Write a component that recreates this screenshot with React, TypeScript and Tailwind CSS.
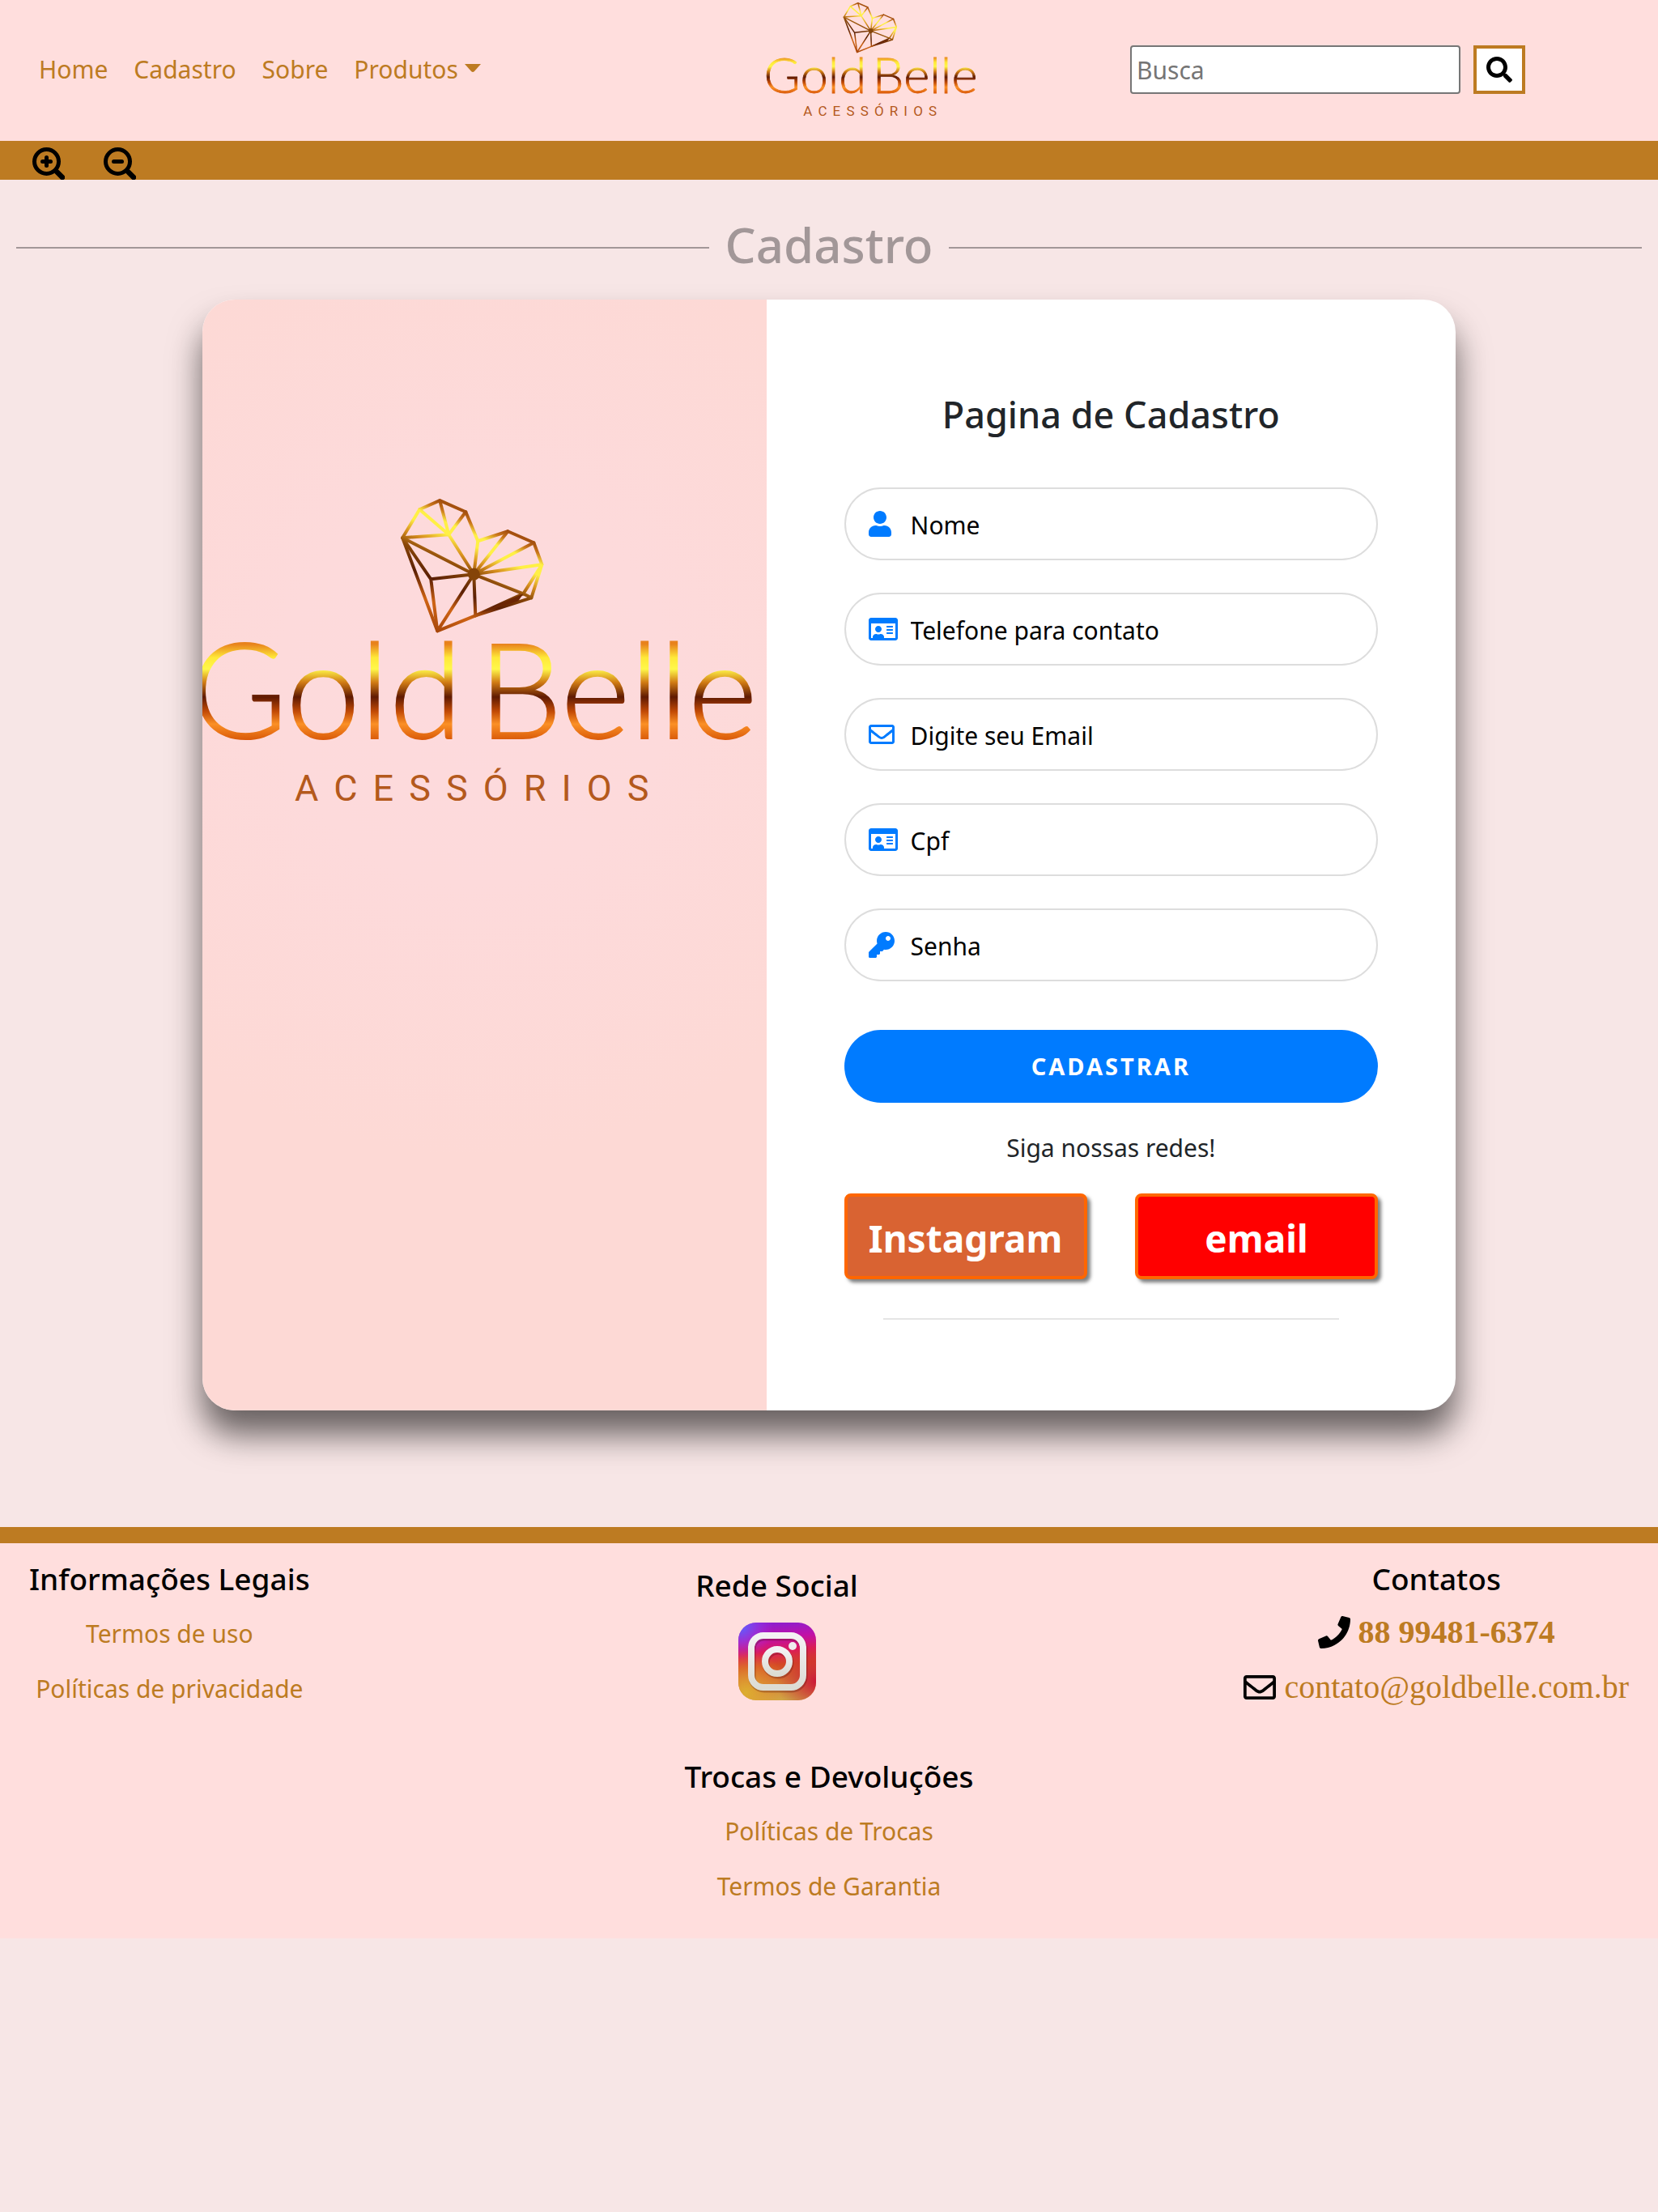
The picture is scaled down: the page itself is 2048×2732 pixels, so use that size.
import type { ReactNode } from "react";
import { FaKey, FaPhone, FaRegEnvelope, FaRegIdCard, FaSearch, FaUser } from "react-icons/fa";

function Logo({ id, viewBox, className }: { id: string; viewBox: string; className: string }) {
  return (
    <svg viewBox={viewBox} className={className} role="img" aria-label="Gold Belle Acessórios">
      <defs>
        <linearGradient id={`${id}-heart`} gradientUnits="userSpaceOnUse" x1="526" y1="611" x2="466" y2="745">
          <stop offset="0" stopColor="#a5500f" />
          <stop offset="0.06" stopColor="#c9741a" />
          <stop offset="0.14" stopColor="#fff046" />
          <stop offset="0.23" stopColor="#fff046" />
          <stop offset="0.34" stopColor="#d8901f" />
          <stop offset="0.45" stopColor="#8a4708" />
          <stop offset="0.62" stopColor="#5a1f04" />
          <stop offset="0.8" stopColor="#cf6414" />
          <stop offset="1" stopColor="#a9480c" />
        </linearGradient>
        <linearGradient id={`${id}-word`} gradientUnits="userSpaceOnUse" x1="0" y1="795" x2="0" y2="914">
          <stop offset="0" stopColor="#e8821c" />
          <stop offset="0.14" stopColor="#ffe838" />
          <stop offset="0.26" stopColor="#fff84a" />
          <stop offset="0.4" stopColor="#d07a14" />
          <stop offset="0.55" stopColor="#5f1a02" />
          <stop offset="0.7" stopColor="#c24a06" />
          <stop offset="0.83" stopColor="#fb9026" />
          <stop offset="1" stopColor="#d85808" />
        </linearGradient>
      </defs>
      <g stroke={`url(#${id}-heart)`} strokeWidth="4" fill="none" strokeLinecap="round" strokeLinejoin="round">
        <path d="M518 629 543 618 575 632 590 668 627 656 659 670 669 697 656 738 587 760 540 779 497 664Z" />
        <path d="M518 629 554 660M543 618 554 660M575 632 554 660M497 664 554 660 585 709" />
        <path d="M590 668 585 709 627 656M659 670 585 709 669 697 646 733" />
        <path d="M497 664 585 709 532 715 497 664M532 715 540 779 585 709 587 760" />
        <path d="M585 709 646 733 656 738M646 733 587 760" />
      </g>
      <path d="M592 757 646 733 640 742Z" fill="#6a2504" />
      <circle cx="585" cy="709" r="7.5" fill="#854408" />
      <g
        fill={`url(#${id}-word)`}
        stroke={`url(#${id}-word)`}
        strokeWidth="2"
        fontFamily="Lato, sans-serif"
        fontSize="163"
        fontWeight="300"
      >
        <text x="235" y="912">Gold</text>
        <text x="591" y="912">Belle</text>
      </g>
      <text x="364" y="988" fill="#b4591c" fontFamily="Roboto, sans-serif" fontSize="45" letterSpacing="19">
        ACESSÓRIOS
      </text>
    </svg>
  );
}

function ZoomIcon({ plus }: { plus: boolean }) {
  return (
    <svg viewBox="0 0 40 40" className="size-10" fill="none" stroke="#000" strokeLinecap="round" aria-hidden="true">
      <circle cx="17.5" cy="17.5" r="15" strokeWidth="5" />
      <path d="M30.5 30.5 37 37" strokeWidth="6.5" />
      <path d="M12.5 17.5h10" strokeWidth="5" />
      {plus && <path d="M17.5 12.5v10" strokeWidth="5" />}
    </svg>
  );
}

function InstagramLogo() {
  return (
    <svg viewBox="0 0 96 96" className="size-24" aria-hidden="true">
      <defs>
        <linearGradient id="ig-base" x1="0.4" y1="0" x2="0.5" y2="1">
          <stop offset="0" stopColor="#8a1fd0" />
          <stop offset="0.2" stopColor="#c010a8" />
          <stop offset="0.38" stopColor="#dc1c58" />
          <stop offset="0.55" stopColor="#d44a24" />
          <stop offset="1" stopColor="#ccaa48" />
        </linearGradient>
        <radialGradient id="ig-violet" cx="0.03" cy="0.05" r="0.42">
          <stop offset="0" stopColor="#5a62ff" />
          <stop offset="1" stopColor="#b030e8" stopOpacity="0" />
        </radialGradient>
        <radialGradient id="ig-red" cx="1" cy="0.75" r="0.5">
          <stop offset="0" stopColor="#cc1838" />
          <stop offset="1" stopColor="#d02a30" stopOpacity="0" />
        </radialGradient>
        <radialGradient id="ig-gold" cx="0.1" cy="0.9" r="0.55">
          <stop offset="0" stopColor="#dcae30" />
          <stop offset="1" stopColor="#f08a30" stopOpacity="0" />
        </radialGradient>
        <linearGradient id="ig-white" x1="0" y1="0" x2="0" y2="1">
          <stop offset="0" stopColor="#f4f2f4" />
          <stop offset="1" stopColor="#dcdcd4" />
        </linearGradient>
      </defs>
      <rect width="96" height="96" rx="22" fill="url(#ig-base)" />
      <rect width="96" height="96" rx="22" fill="url(#ig-gold)" />
      <rect width="96" height="96" rx="22" fill="url(#ig-red)" />
      <rect width="96" height="96" rx="22" fill="url(#ig-violet)" />
      <g fill="none" stroke="#5a1010" strokeOpacity="0.3" strokeWidth="9">
        <rect x="17" y="18" width="64" height="64" rx="15" />
        <circle cx="49" cy="50" r="15" />
      </g>
      <g fill="none" stroke="url(#ig-white)" strokeWidth="8">
        <rect x="16" y="16" width="64" height="64" rx="15" />
        <circle cx="48" cy="48" r="15" />
      </g>
      <circle cx="67" cy="29" r="5" fill="#efecee" />
    </svg>
  );
}

function Field({ id, label, type, icon }: { id: string; label: string; type: string; icon: ReactNode }) {
  return (
    <label
      htmlFor={id}
      className="flex h-[90px] items-center rounded-full border-2 border-[#dddddd] bg-white pl-7 pr-8 text-[#007bff]"
    >
      <span className="sr-only">{label}</span>
      <span className="w-[52px] shrink-0 text-[32px]">{icon}</span>
      <input
        id={id}
        type={type}
        placeholder={label}
        className="h-full min-w-0 flex-1 bg-transparent pt-0.5 text-[30px] text-black outline-none placeholder:text-black"
      />
    </label>
  );
}

function FooterTitle({ children }: { children: ReactNode }) {
  return <h3 className="text-[37px] leading-[48px] font-medium text-black">{children}</h3>;
}

function FooterLinks({ items }: { items: string[] }) {
  return (
    <ul className="mt-5 flex flex-col items-center gap-5 text-[30px] leading-[48px]">
      {items.map((item) => (
        <li key={item}>
          <a href="#">{item}</a>
        </li>
      ))}
    </ul>
  );
}

const socialButton =
  "h-[106px] w-[300px] rounded-lg border-4 border-[#ff6600] pt-1 text-[46px] font-bold text-white shadow-[4px_4px_4px_rgba(0,0,0,0.5)]";

export default function App() {
  return (
    <div className="min-h-screen bg-[#f7e6e6] font-['Noto_Sans',sans-serif] text-[#212529]">
      <header className="grid min-h-[174px] grid-cols-[899fr_449fr_652fr] items-center bg-[#ffdedd] pb-0.5 pl-12">
        <nav className="flex gap-8 text-[30px] leading-[48px] text-[#bd7b22]">
          <a href="#">Home</a>
          <a href="#">Cadastro</a>
          <a href="#">Sobre</a>
          <button type="button" className="flex items-center gap-2">
            Produtos
            <svg viewBox="0 0 20 10" className="mb-1 h-2.5 w-5" fill="currentColor" aria-hidden="true">
              <path d="M0 0h20L12 9a3 3 0 0 1-4 0Z" />
            </svg>
          </button>
        </nav>
        <a href="#" className="self-start">
          <Logo id="brand" viewBox="244 608 692 410" className="w-[261px] overflow-visible" />
        </a>
        <form className="flex gap-4" onSubmit={(e) => e.preventDefault()}>
          <input
            type="search"
            aria-label="Busca"
            placeholder="Busca"
            className="h-[60px] w-[408px] rounded border-2 border-[#767676] bg-white px-1.5 text-[30px] text-black placeholder:text-[#757575]"
          />
          <button
            type="submit"
            aria-label="Buscar"
            className="flex h-[60px] w-16 items-center justify-center border-4 border-[#bd7b22] bg-white text-[32px] text-black"
          >
            <FaSearch />
          </button>
        </form>
      </header>

      <div className="flex gap-12 bg-[#bd7b22] px-10 pt-2">
        <button type="button" aria-label="Aumentar zoom">
          <ZoomIcon plus />
        </button>
        <button type="button" aria-label="Diminuir zoom">
          <ZoomIcon plus={false} />
        </button>
      </div>

      <main className="pt-9 pb-36">
        <div className="flex items-center gap-5 px-5">
          <div className="h-0.5 flex-1 bg-[#a29798]" />
          <h1 className="pb-2 text-[60px] leading-[88px] font-medium text-[#a29798]">Cadastro</h1>
          <div className="h-0.5 flex-1 bg-[#a29798]" />
        </div>

        <section className="mx-auto mt-4 flex w-full max-w-[1548px] overflow-hidden rounded-[40px] bg-white shadow-[0_30px_40px_rgba(0,0,0,0.58)]">
          <div className="w-[45%] bg-[radial-gradient(circle_at_48%_35%,#fddadd_0%,#fddadb_25%,#fdd9d5_60%)]">
            <Logo id="cover" viewBox="250 370 696 640" className="w-full" />
          </div>
          <form className="flex-1 px-24 pt-28 pb-28" onSubmit={(e) => e.preventDefault()}>
            <h2 className="text-center text-[45px] leading-[60px] font-medium">Pagina de Cadastro</h2>
            <div className="mt-[60px] flex flex-col gap-10">
              <Field id="nome" label="Nome" type="text" icon={<FaUser className="w-7" />} />
              <Field id="telefone" label="Telefone para contato" type="tel" icon={<FaRegIdCard className="size-9" />} />
              <Field id="email" label="Digite seu Email" type="email" icon={<FaRegEnvelope />} />
              <Field id="cpf" label="Cpf" type="text" icon={<FaRegIdCard className="size-9" />} />
              <Field id="senha" label="Senha" type="password" icon={<FaKey />} />
            </div>
            <button
              type="submit"
              className="mt-[60px] h-[90px] w-full rounded-full bg-[#007bff] text-[29px] font-bold tracking-[3px] text-white"
            >
              CADASTRAR
            </button>
            <p className="mt-8 text-center text-[30px] leading-[48px]">Siga nossas redes!</p>
            <div className="mt-8 flex justify-between">
              <button type="button" className={`${socialButton} bg-[#d96332]`}>
                Instagram
              </button>
              <button type="button" className={`${socialButton} bg-[#ff0000]`}>
                email
              </button>
            </div>
            <hr className="mx-12 mt-12 border-t-2 border-[#e5e5e5]" />
          </form>
        </section>
      </main>

      <footer className="border-t-20 border-[#bd7b22] bg-[#ffdedd] px-9 pt-5 pb-10 text-[#bd7b22]">
        <div className="flex justify-between text-center">
          <div>
            <FooterTitle>Informações Legais</FooterTitle>
            <FooterLinks items={["Termos de uso", "Políticas de privacidade"]} />
          </div>
          <div className="flex flex-col items-center pt-2">
            <FooterTitle>Rede Social</FooterTitle>
            <a href="#" aria-label="Instagram" className="mt-[22px]">
              <InstagramLogo />
            </a>
          </div>
          <div>
            <FooterTitle>Contatos</FooterTitle>
            <ul className="mt-[18px] flex flex-col items-center gap-5 font-['Liberation_Serif',serif] text-[40px] leading-[48px]">
              <li className="flex items-center gap-2.5">
                <FaPhone className="text-black" />
                <a href="#" className="font-bold">
                  88 99481-6374
                </a>
              </li>
              <li className="flex items-center gap-2.5">
                <FaRegEnvelope className="text-black" />
                <a href="#">contato@goldbelle.com.br</a>
              </li>
            </ul>
          </div>
        </div>
        <div className="mt-[60px] text-center">
          <FooterTitle>Trocas e Devoluções</FooterTitle>
          <FooterLinks items={["Políticas de Trocas", "Termos de Garantia"]} />
        </div>
      </footer>
    </div>
  );
}
